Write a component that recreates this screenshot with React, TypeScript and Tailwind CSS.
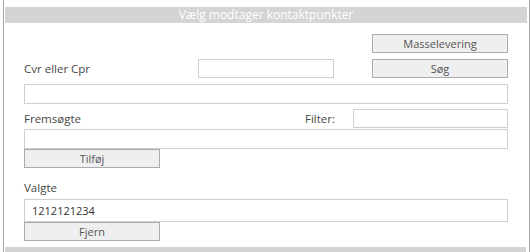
import React from 'react';

const Btn = ({ label, className = '' }: { label: string; className?: string }) => (
  <button
    className={`h-[19px] w-[136px] border border-[#ababab] bg-[#efefef] text-[11px] leading-[17px] text-[#555] ${className}`}
  >
    {label}
  </button>
);

const App = () => {
  return (
    <div className="h-[252px] w-[532px] overflow-hidden bg-white font-['Open_Sans','Noto_Sans',sans-serif]">
      <div className="ml-[3px] flex h-full w-[527px] flex-col border-x border-[#a6a6a6] pl-[1px] pt-[7px]">
        {/* Header */}
        <div className="h-[16px] w-[522px] bg-[#d4d4d4] text-center text-[12px] leading-[16px] text-white">
          Vælg modtager kontaktpunkter
        </div>

        <div className="flex w-[503px] flex-col pl-[19px] text-[11.5px] text-[#474747]">
          <div className="mt-[11px] flex justify-end">
            <Btn label="Masselevering" />
          </div>

          <div className="mt-[6px] flex items-center">
            <span className="w-[174px] pt-[1px]">Cvr eller Cpr</span>
            <input className="h-[19px] w-[136px] border border-[#cfcfcf] outline-none" />
            <div className="flex-1" />
            <Btn label="Søg" />
          </div>

          <div className="mt-[6px] h-[20px] w-[484px] border border-[#cfcfcf]" />

          <div className="mt-[5px] flex items-center">
            <span className="flex-1">Fremsøgte</span>
            <span className="mr-[18px]">Filter:</span>
            <input className="h-[19px] w-[155px] border border-[#cfcfcf] outline-none" />
          </div>

          <div className="mt-[1px] h-[20px] w-[484px] border border-[#cfcfcf]" />
          <Btn label="Tilføj" />

          <div className="mt-[12px] leading-[16px]">Valgte</div>
          <div className="mt-[3px] h-[23px] w-[484px] border border-[#cfcfcf] pl-[7px] text-[11px] leading-[21px] text-[#333]">
            1212121234
          </div>
          <Btn label="Fjern" />
        </div>

        <div className="mt-auto h-[5px] w-[521px] bg-[#d4d4d4]" />
      </div>
    </div>
  );
};

export default App;
